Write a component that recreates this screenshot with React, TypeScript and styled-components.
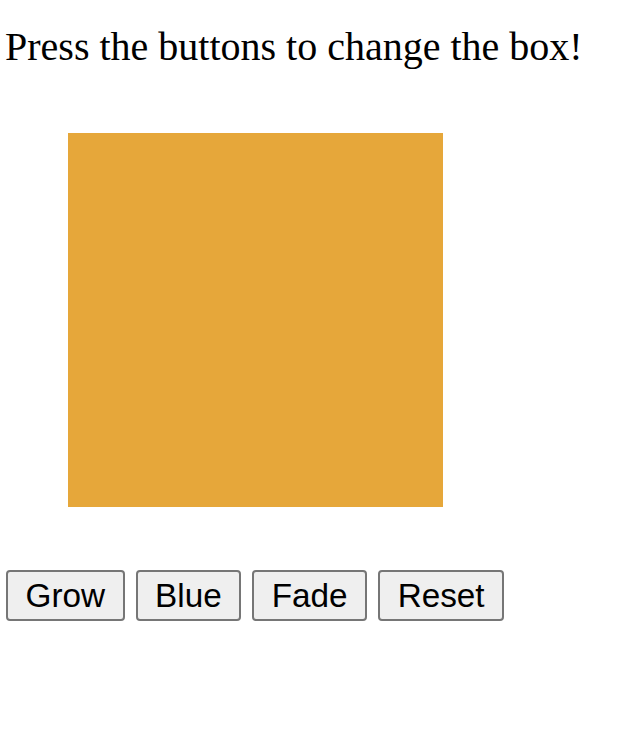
import React from "react";
import styled, { createGlobalStyle } from "styled-components";

const GlobalStyle = createGlobalStyle`
  html, body {
    margin: 0;
    padding: 0;
    background: #ffffff;
  }
`;

const Page = styled.div`
  padding: 0 5px;
  font-family: "Liberation Serif", "Times New Roman", serif;
  color: #000000;
`;

const Title = styled.p`
  margin: 25px 0 0 0;
  font-size: 40px;
  line-height: 44px;
  font-weight: 400;
`;

const Box = styled.div<{ $color: string }>`
  width: 375px;
  height: 374px;
  margin: 64px 0 0 63px;
  background-color: ${(p) => p.$color};
`;

const ButtonRow = styled.div`
  display: flex;
  gap: 11px;
  margin: 63px 0 0 1px;
`;

const Button = styled.button`
  box-sizing: border-box;
  height: 51px;
  padding: 0 17.5px;
  border: 2px solid #767676;
  border-radius: 4px;
  background: #efefef;
  color: #000000;
  font-family: "Liberation Sans", Arial, sans-serif;
  font-size: 33.3px;
  line-height: 1;
  cursor: pointer;
`;

export default function App() {
  return (
    <>
      <GlobalStyle />
      <Page>
        <Title>Press the buttons to change the box!</Title>
        <Box $color="#e6a73a" />
        <ButtonRow>
          <Button>Grow</Button>
          <Button>Blue</Button>
          <Button>Fade</Button>
          <Button>Reset</Button>
        </ButtonRow>
      </Page>
    </>
  );
}
